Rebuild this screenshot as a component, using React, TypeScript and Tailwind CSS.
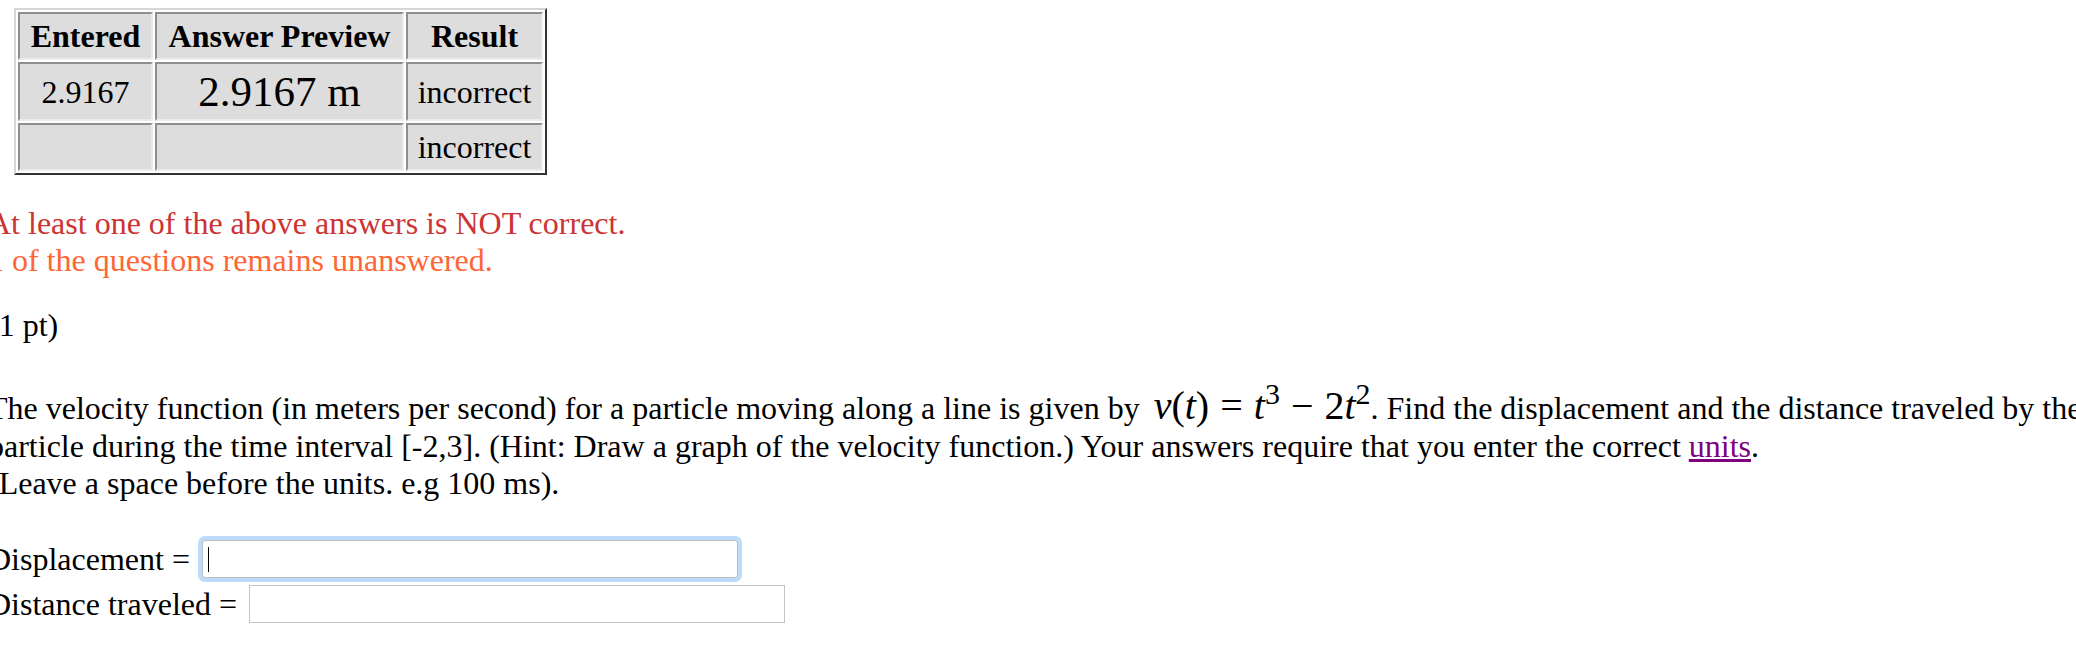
import React from "react";

function Formula() {
  return (
    <span className="ml-[6px] text-[40px] leading-[0px] whitespace-nowrap">
      <i>v</i>(<i>t</i>)<span className="mx-[11px]">=</span>
      <i>t</i>
      <sup>3</sup>
      <span className="mx-[11px]">−</span>2<i>t</i>
      <sup>2</sup>
    </span>
  );
}

export default function App() {
  const cell = "border-2 border-t-[#8e8e8e] border-l-[#8e8e8e] border-b-[#ececec] border-r-[#ececec] bg-[#dddddd] text-center p-0 leading-[36px]";
  return (
    <div className="w-full h-[648px] overflow-hidden bg-white text-black font-['Liberation_Serif',serif] text-[32px]">
      <div className="pt-[8px] -ml-[12px] whitespace-nowrap">
        {/* results table */}
        <table className="ml-[26px] border-separate border-spacing-[2px] border-2 border-t-[#d6d6d6] border-l-[#d6d6d6] border-b-[#333333] border-r-[#333333]">
          <tbody>
            <tr className="h-[48px]">
              <th className={`${cell} w-[135px] font-bold`}>Entered</th>
              <th className={`${cell} w-[249px] font-bold`}>Answer Preview</th>
              <th className={`${cell} w-[137px] font-bold`}>Result</th>
            </tr>
            <tr className="h-[59px]">
              <td className={cell}>2.9167</td>
              <td className={`${cell} text-[43px] leading-[48px]`}>2.9167 m</td>
              <td className={cell}>incorrect</td>
            </tr>
            <tr className="h-[48px]">
              <td className={cell}></td>
              <td className={cell}></td>
              <td className={cell}>incorrect</td>
            </tr>
          </tbody>
        </table>

        <div className="mt-[30px] leading-[37px]">
          <div className="text-[#cc3333]">At least one of the above answers is NOT correct.</div>
          <div className="text-[#ff6633]">1 of the questions remains unanswered.</div>
        </div>

        <div className="mt-[28px] leading-[37px]">(1 pt)</div>

        <div className="mt-[46px] leading-[37px]">
          <div className="h-[38px]">
            The velocity function (in meters per second) for a particle moving along a line is given by <Formula />. Find the displacement and the distance traveled by the
          </div>
          <div className="h-[37px]">
            particle during the time interval [-2,3]. (Hint: Draw a graph of the velocity function.) Your answers require that you enter the correct{" "}
            <a href="#" className="text-[#800080] underline">units</a>.
          </div>
          <div className="h-[37px]">(Leave a space before the units. e.g 100 ms).</div>
        </div>

        {/* answer blanks */}
        <div className="mt-[34px]">
          <div className="h-[45px] flex items-center gap-[12px]">
            <span>Displacement =</span>
            <div className="relative w-[536px] h-[38px] rounded-[3px] border border-[#bdbdbd] bg-white shadow-[0_0_0_4px_#bcdcfa]">
              <span className="absolute left-[5px] top-[6px] w-px h-[25px] bg-black" />
            </div>
          </div>
          <div className="h-[45px] flex items-center gap-[12px]">
            <span>Distance traveled =</span>
            <input type="text" className="w-[536px] h-[38px] border border-[#c4c4c4] bg-white outline-none" />
          </div>
        </div>
      </div>
    </div>
  );
}
